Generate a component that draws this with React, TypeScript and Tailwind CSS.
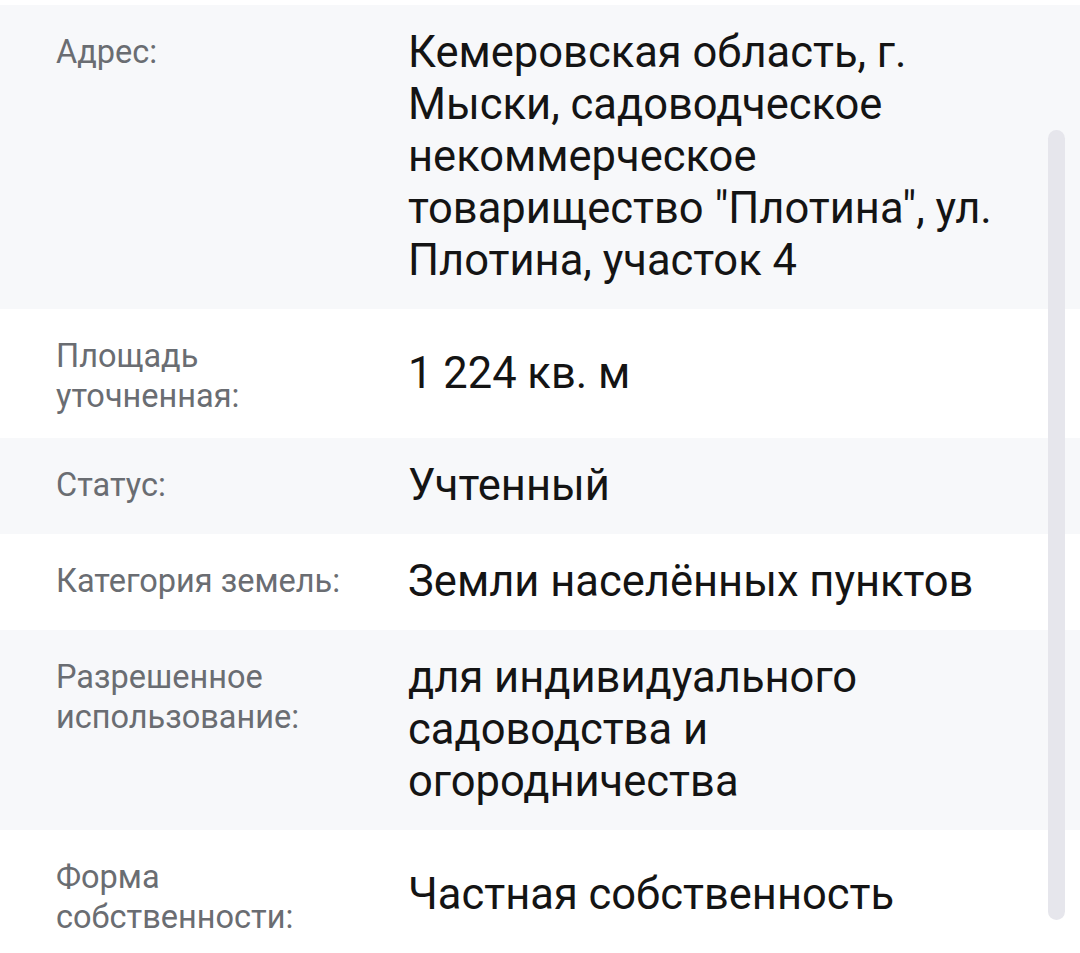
import React from 'react';

type Row = { label: string; value: string; shaded: boolean };

const ROWS: Row[] = [
  {
    label: 'Адрес:',
    value: 'Кемеровская область, г. Мыски, садоводческое некоммерческое товарищество "Плотина", ул. Плотина, участок 4',
    shaded: true,
  },
  { label: 'Площадь уточненная:', value: '1 224 кв. м', shaded: false },
  { label: 'Статус:', value: 'Учтенный', shaded: true },
  { label: 'Категория земель:', value: 'Земли населённых пунктов', shaded: false },
  { label: 'Разрешенное использование:', value: 'для индивидуального садоводства и огородничества', shaded: true },
  { label: 'Форма собственности:', value: 'Частная собственность', shaded: false },
];

const App: React.FC = () => {
  return (
    <div className="relative w-[1080px] h-[953px] overflow-hidden bg-white pt-[5px] font-['Roboto',sans-serif]">
      {ROWS.map((row) => (
        <div
          key={row.label}
          className={`flex py-[22px] pl-[56px] ${row.shaded ? 'bg-[#f7f8fa]' : 'bg-white'}`}
        >
          {/* Label */}
          <div className="w-[352px] shrink-0 pt-[5px] pr-[46px] text-[32.5px] leading-[40px] text-[#6a6d72]">
            {row.label}
          </div>
          {/* Value */}
          <div className="w-[612px] self-center text-[43.5px] leading-[52px] text-[#141414]">
            {row.value}
          </div>
        </div>
      ))}

      {/* Scrollbar */}
      <div className="absolute left-[1048px] top-[130px] w-[17px] h-[790px] rounded-full bg-[#e6e6ec]" />
    </div>
  );
};

export default App;
